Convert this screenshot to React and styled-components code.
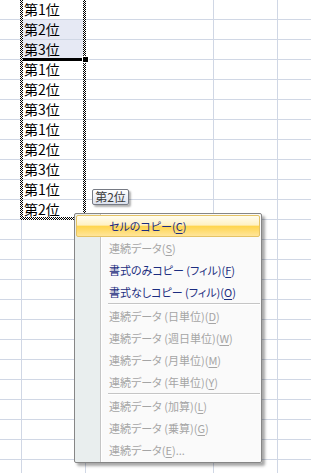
import React from 'react';
import styled, { createGlobalStyle } from 'styled-components';

const GlobalStyle = createGlobalStyle`
  body {
    margin: 0;
    background: #fff;
    overflow: hidden;
  }
`;

const Sheet = styled.div`
  position: relative;
  width: 311px;
  height: 473px;
  overflow: hidden;
  font-family: "Noto Sans CJK JP", "Noto Sans", sans-serif;
`;

const Row = styled.div`
  display: flex;
  height: 20px;
`;

const Cell = styled.div`
  position: relative;
  box-sizing: border-box;
  flex: none;
  width: ${(p) => p.w}px;
  height: 20px;
  padding-left: 2px;
  border-right: 1px solid #d0d7e5;
  border-bottom: 1px solid #d0d7e5;
  background: ${(p) => (p.selected ? '#e6e9f4' : '#fff')};
  color: #000;
  font-size: 14px;
  line-height: 19px;
  white-space: nowrap;

  ${(p) =>
    p.fillEdge &&
    `
    &::after {
      content: '';
      position: absolute;
      left: 1px;
      right: 2px;
      bottom: -2px;
      height: 3px;
      background: #000;
      z-index: 2;
    }
    &::before {
      content: '';
      position: absolute;
      right: -3px;
      bottom: -3px;
      width: 5px;
      height: 5px;
      background: #000;
      outline: 1px solid #fff;
      z-index: 3;
    }
  `}
`;

const Marquee = styled.div`
  position: absolute;
  left: 20px;
  top: -3px;
  width: 66px;
  height: 223px;
  box-sizing: border-box;
  padding: 3px;
  background: repeating-conic-gradient(#000 0 25%, #fff 0 50%) 0 0 / 2px 2px;
  -webkit-mask: linear-gradient(#000 0 0) content-box, linear-gradient(#000 0 0);
  -webkit-mask-composite: xor;
  mask-composite: exclude;
`;

const Tip = styled.div`
  position: absolute;
  left: 92px;
  top: 189px;
  width: 37px;
  height: 16px;
  box-sizing: border-box;
  border: 1px solid #767a84;
  border-radius: 2px;
  background: linear-gradient(#ffffff, #dde2ee);
  box-shadow: 2px 2px 2px rgba(0, 0, 0, 0.3);
  color: #3a3a3a;
  font-size: 12px;
  line-height: 14px;
  text-align: center;
`;

const Menu = styled.div`
  position: absolute;
  left: 74px;
  top: 213px;
  width: 188px;
  height: 250px;
  box-sizing: border-box;
  padding: 1px;
  border: 1px solid #868686;
  border-radius: 2px;
  background: linear-gradient(
    to right,
    #e9eeee 0 25px,
    #c5c5c5 25px 26px,
    #ffffff 26px 27px,
    #fafafa 27px
  );
  box-shadow: 3px 3px 3px rgba(0, 0, 0, 0.35);
  display: flex;
  flex-direction: column;
`;

const Item = styled.div`
  box-sizing: border-box;
  height: 22px;
  padding-left: 32px;
  font-size: 11px;
  line-height: 20px;
  white-space: nowrap;
  font-feature-settings: "palt";
  color: ${(p) => (p.disabled ? '#a5a5a5' : '#1c2d80')};
  border: 1px solid ${(p) => (p.active ? '#e5c365' : 'transparent')};
  border-radius: 2px;
  background: ${(p) =>
    p.active
      ? 'linear-gradient(#fffdf0 0%, #fff1c4 45%, #ffd54f 52%, #ffe59a 100%)'
      : 'transparent'};

  u {
    text-decoration-thickness: 1px;
    text-underline-offset: 2px;
  }
`;

const Separator = styled.div`
  height: 2px;
  margin-left: 32px;
  box-sizing: border-box;
  border-top: 1px solid #c5c5c5;
  background: #fff;
`;

const widths = [22, 64, 128, 64, 64];
const labels = ['第1位', '第2位', '第3位', '第1位', '第2位', '第3位', '第1位', '第2位', '第3位', '第1位', '第2位'];

const menu = [
  { text: 'セルのコピー', key: 'C', active: true },
  { text: '連続データ', key: 'S', disabled: true },
  { text: '書式のみコピー (フィル)', key: 'F' },
  { text: '書式なしコピー (フィル)', key: 'O' },
  'sep',
  { text: '連続データ (日単位)', key: 'D', disabled: true },
  { text: '連続データ (週日単位)', key: 'W', disabled: true },
  { text: '連続データ (月単位)', key: 'M', disabled: true },
  { text: '連続データ (年単位)', key: 'Y', disabled: true },
  'sep',
  { text: '連続データ (加算)', key: 'L', disabled: true },
  { text: '連続データ (乗算)', key: 'G', disabled: true },
  { text: '連続データ', key: 'E', disabled: true, tail: '...' },
];

export default function App() {
  const rows = Array.from({ length: 24 }, (_, r) => r);
  return (
    <>
      <GlobalStyle />
      <Sheet>
        {rows.map((r) => (
          <Row key={r}>
            {widths.map((w, c) => (
              <Cell
                key={c}
                w={w}
                selected={c === 1 && (r === 1 || r === 2)}
                fillEdge={c === 1 && r === 2}
              >
                {c === 1 ? labels[r] : ''}
              </Cell>
            ))}
          </Row>
        ))}
        <Marquee />
        <Tip>第2位</Tip>
        <Menu>
          {menu.map((m, i) =>
            m === 'sep' ? (
              <Separator key={i} />
            ) : (
              <Item key={i} active={m.active} disabled={m.disabled}>
                {m.text}(<u>{m.key}</u>){m.tail}
              </Item>
            )
          )}
        </Menu>
      </Sheet>
    </>
  );
}
